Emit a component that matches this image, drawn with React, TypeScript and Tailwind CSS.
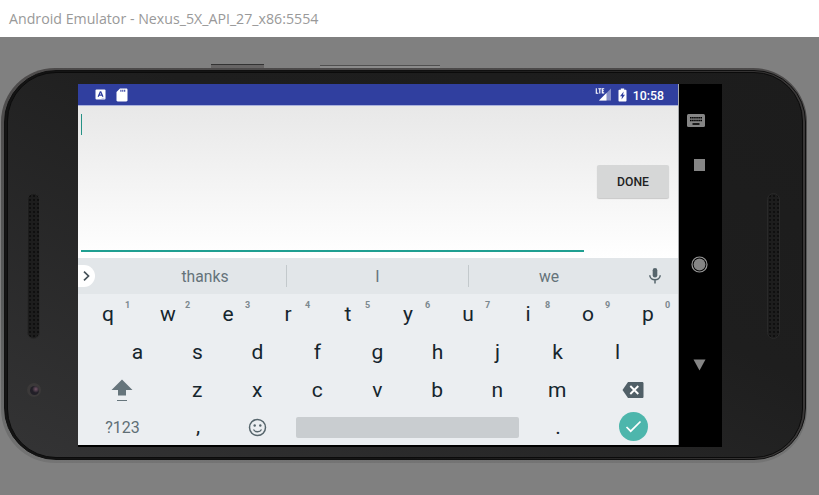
import React from "react";

const topRow = ["q", "w", "e", "r", "t", "y", "u", "i", "o", "p"];
const middleRow = ["a", "s", "d", "f", "g", "h", "j", "k", "l"];
const bottomRow = ["z", "x", "c", "v", "b", "n", "m"];

function Speaker() {
  return (
    <div className="h-[146px] w-[13px] rounded-full border border-[#292929] bg-[#1d1d1d] bg-[radial-gradient(circle,#080808_0.5px,transparent_1.1px)] bg-[size:4px_4px]" />
  );
}

function Key({ label, hint }: { label: string; hint?: string }) {
  return (
    <div className="relative flex w-[60px] items-center justify-center text-[21px] leading-none text-[#15252d]">
      {label}
      {hint && (
        <span className="absolute left-[47px] top-[5px] text-[9px] font-bold leading-none text-[#7b888e]">
          {hint}
        </span>
      )}
    </div>
  );
}

function StatusBar() {
  return (
    <div className="flex h-[22px] items-center border-b border-[#a9b1dc] bg-[#303f9f] pl-[17px] pr-[14px] text-white">
      <svg width="11" height="11" viewBox="0 0 11 11">
        <rect x="0.5" y="0.5" width="10" height="10" rx="1" fill="#fff" />
        <path d="M3.2 7.7 5.3 2.8h.5L7.9 7.7M4 6.1h3.1" fill="none" stroke="#303f9f" strokeWidth="1.3" />
        <path d="M6.5 9.3h3" stroke="#a9b1dc" strokeWidth="0.7" />
      </svg>
      <svg className="ml-[10px]" width="12" height="14" viewBox="0 0 12 14">
        <path d="M4 .5h6.3c.7 0 1.2.5 1.2 1.2v10.6c0 .7-.5 1.2-1.2 1.2H1.7c-.7 0-1.2-.5-1.2-1.2V4z" fill="#fff" />
        <path d="M4.9 1.8v2M6.8 1.8v2M8.7 1.8v2" stroke="#303f9f" strokeWidth="1.1" />
      </svg>
      <div className="flex-1" />
      <svg width="17" height="15" viewBox="0 0 17 15">
        <path d="M16 1.5V13.5H4z" fill="#8790c8" />
        <path d="M11.5 6V13.5H4z" fill="#fff" />
        <path d="M0 0h9.5v7H0z" fill="#303f9f" />
        <path d="M1.3 1.2v5h2M3.3 1.7h3M4.8 1.7v4.7M9.2 1.7H7.3v4.2h1.9M7.3 3.8h1.6" fill="none" stroke="#fff" strokeWidth="1.1" />
      </svg>
      <svg className="ml-[6px]" width="9" height="14" viewBox="0 0 9 14">
        <path d="M2.8.5h3.4v1.2h1.3c.6 0 1 .4 1 1v9.8c0 .6-.4 1-1 1h-6c-.6 0-1-.4-1-1V2.7c0-.6.4-1 1-1h1.3z" fill="#fff" />
        <path d="M5.7 3.5 2 8.3h2L3.5 11.5 7 6.8H5z" fill="#303f9f" />
      </svg>
      <span className="ml-[6px] pt-[3px] text-[12.3px] font-medium leading-none">10:58</span>
    </div>
  );
}

function Suggestions() {
  return (
    <div className="flex h-[36px] items-center bg-[#e2e6e9] text-[15.7px] text-[#65737a]">
      <div className="flex h-[22px] w-[17px] items-center rounded-r-full bg-white">
        <svg width="17" height="22" viewBox="0 0 17 22">
          <path d="m6 6.7 4.5 4.3L6 15.3" fill="none" stroke="#455158" strokeWidth="1.7" />
        </svg>
      </div>
      <div className="w-[29px]" />
      <div className="w-[162px] pt-[2px] text-center">thanks</div>
      <div className="h-[22px] w-px bg-[#c3c9cc]" />
      <div className="w-[181px] pt-[2px] text-center">I</div>
      <div className="h-[22px] w-px bg-[#c3c9cc]" />
      <div className="w-[160px] pt-[2px] text-center">we</div>
      <svg className="ml-[19px]" width="14" height="18" viewBox="0 0 14 18">
        <rect x="4.7" y="1" width="4.6" height="9.5" rx="2.3" fill="#56656c" />
        <path d="M1.8 8.3C1.8 14.2 12.2 14.2 12.2 8.3M7 12.7V16.5" fill="none" stroke="#56656c" strokeWidth="1.5" />
      </svg>
    </div>
  );
}

function Keyboard() {
  return (
    <div className="flex h-[151px] flex-col bg-[#ebeef1]">
      <div className="flex h-[39px] pt-[2px]">
        {topRow.map((k, i) => (
          <Key key={k} label={k} hint={String((i + 1) % 10)} />
        ))}
      </div>
      <div className="flex h-[38px] pl-[29.5px]">
        {middleRow.map((k) => (
          <Key key={k} label={k} />
        ))}
      </div>
      <div className="flex h-[37px] items-stretch">
        <div className="flex w-[89px] items-center justify-center">
          <svg width="22" height="24" viewBox="0 0 22 24">
            <path d="M11 1.5 21.5 12H15v5.5H7V12H.5z" fill="#66757c" />
            <path d="M6 22.5h10" stroke="#66757c" strokeWidth="1" />
          </svg>
        </div>
        <div className="flex pl-[0.5px] pt-px">
          {bottomRow.map((k) => (
            <Key key={k} label={k} />
          ))}
        </div>
        <div className="flex w-[91px] items-center justify-center pt-px">
          <svg width="22" height="16" viewBox="0 0 22 16">
            <path d="M6 0h14c1 0 1.5.5 1.5 1.5v13c0 1-.5 1.5-1.5 1.5H6L.5 8z" fill="#505f67" />
            <path d="m8.3 4 8 8M16.3 4l-8 8" stroke="#fff" strokeWidth="1.9" />
          </svg>
        </div>
      </div>
      <div className="flex h-[37px] items-center">
        <div className="w-[89px] pt-[2px] text-center text-[16px] text-[#5f6e75]">?123</div>
        <div className="pl-px">
          <Key label="," />
        </div>
        <div className="flex w-[60px] justify-center">
          <svg width="20" height="20" viewBox="0 0 20 20">
            <circle cx="9.5" cy="10.5" r="8" fill="none" stroke="#56656c" strokeWidth="1.5" />
            <circle cx="6.7" cy="8.5" r="1.2" fill="#56656c" />
            <circle cx="12.3" cy="8.5" r="1.2" fill="#56656c" />
            <path d="M5.5 12.5C7 15.5 12 15.5 13.5 12.5" fill="none" stroke="#56656c" strokeWidth="1.3" />
          </svg>
        </div>
        <div className="ml-[8px] mt-px h-[21px] w-[223px] rounded-[2px] bg-[#c9cdd0]" />
        <div className="ml-[9px] pt-px">
          <Key label="." />
        </div>
        <div className="ml-[31px] flex size-[29px] items-center justify-center rounded-full bg-[#4db6ac]">
          <svg width="19" height="19" viewBox="0 0 19 19">
            <path d="m2.5 10 4.2 4.2 9.8-9.7" fill="none" stroke="#fff" strokeWidth="1.7" />
          </svg>
        </div>
      </div>
    </div>
  );
}

function Screen() {
  return (
    <div className="flex h-[361px] w-[601px] flex-col border-r border-[#a7a9ab] font-[Roboto,sans-serif]">
      <StatusBar />
      <div className="flex h-[152px] bg-linear-to-b from-[#e8e8e8] to-white">
        <div className="ml-[3px] mt-[2px] h-[144px] w-[503px] border-b-2 border-[#1f9f91] pt-[6px]">
          <div className="h-[21px] w-px bg-[#259286]" />
        </div>
        <div className="ml-[13px] mt-[59px] flex h-[33px] w-[72px] items-center justify-center rounded-[2px] bg-[#d6d7d7] pt-px text-[12.2px] font-medium text-[#212121] shadow-[0_1px_1px_#c8c8c8]">
          DONE
        </div>
      </div>
      <Suggestions />
      <Keyboard />
    </div>
  );
}

function NavBar() {
  return (
    <div className="flex w-[43px] flex-col bg-black">
      <svg className="ml-[8px] mt-[30px]" width="18" height="13" viewBox="0 0 18 13">
        <rect width="18" height="13" rx="1.5" fill="#858585" />
        <path d="M3 3.8h12M3 6.5h12" stroke="#000" strokeWidth="1.6" strokeDasharray="1.6 .48" />
        <path d="M5.5 10h7" stroke="#000" strokeWidth="1.6" />
      </svg>
      <div className="ml-[15px] mt-[32px] h-[12px] w-[11px] bg-[#858585]" />
      <svg className="ml-[12px] mt-[85px]" width="17" height="17" viewBox="0 0 17 17">
        <circle cx="8.5" cy="8.5" r="7.5" fill="none" stroke="#999999" strokeWidth="1.2" />
        <circle cx="8.5" cy="8.5" r="5.9" fill="#858585" />
      </svg>
      <svg className="ml-[14px] mt-[86px]" width="13" height="12" viewBox="0 0 13 12">
        <path d="M.5.5h12L6.5 11.5z" fill="#858585" />
      </svg>
    </div>
  );
}

export default function App() {
  return (
    <div className="h-[495px] w-[819px] overflow-hidden bg-[#808080]">
      <div className="flex h-[37px] items-center bg-white pl-[9px] font-['Open_Sans',sans-serif] text-[14.2px] text-[#999999]">
        <span className="whitespace-nowrap">Android Emulator - Nexus_5X_API_27_x86:5554</span>
      </div>
      <div className="flex h-[31px] items-end">
        <div className="ml-[211px] h-[4px] w-[53px] border-t border-[#333333] bg-[#676565]" />
        <div className="ml-[56px] h-[3px] w-[120px] border-t border-[#505050] bg-[#8b8b8b]" />
      </div>
      <div className="ml-px h-[395px] w-[806px] rounded-[54px] bg-linear-to-b from-[#4c4a4a] from-0% via-[#595b5b] via-60% to-[#747474] to-100% pb-[3px] pl-[3px] pr-px pt-[2px]">
        <div className="h-full rounded-[52px] border border-[#101010] bg-linear-to-r from-[#141414] from-50% to-[#3a3838] px-[2px] pb-px pt-px">
          <div className="flex h-full rounded-[49px] border border-[#0b0b0b] bg-linear-to-tr from-[#343435] via-[#1e1e1e] via-60% to-[#1c1c1c]">
            <div className="w-[70px] shrink-0">
              <div className="ml-[19px] mt-[120px]">
                <Speaker />
              </div>
              <div className="ml-[19px] mt-[44px] flex size-[14px] items-center justify-center rounded-full bg-[#3b3939]">
                <div className="size-[9px] rounded-full bg-[radial-gradient(circle_at_65%_35%,#725466,#211f27_45%)]" />
              </div>
            </div>
            <div className="mt-[11px] flex h-[363px] shrink-0 bg-black">
              <Screen />
              <NavBar />
            </div>
            <div className="ml-[45px] mt-[120px]">
              <Speaker />
            </div>
          </div>
        </div>
      </div>
    </div>
  );
}
